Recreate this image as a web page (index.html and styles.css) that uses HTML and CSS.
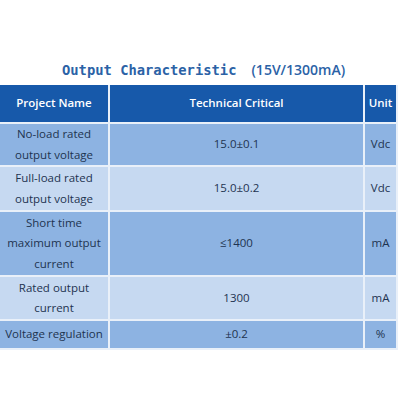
FILE: index.html
```html
<!DOCTYPE html>
<html>
<head>
<meta charset="utf-8">
<link rel="stylesheet" href="styles.css">
</head>
<body>
<div class="page">
  <h1 class="title"><span class="mono">Output Characteristic</span><span class="paren">(15V/1300mA)</span></h1>
  <table class="spec">
    <colgroup><col class="c1"><col class="c2"><col class="c3"></colgroup>
    <tr class="head"><th>Project Name</th><th>Technical Critical</th><th>Unit</th></tr>
    <tr class="mid r1"><td>No-load rated<br>output voltage</td><td class="val">15.0±0.1</td><td>Vdc</td></tr>
    <tr class="light r2"><td>Full-load rated<br>output voltage</td><td class="val">15.0±0.2</td><td>Vdc</td></tr>
    <tr class="mid r3"><td>Short time<br>maximum output<br>current</td><td class="val">≤1400</td><td>mA</td></tr>
    <tr class="light r4"><td>Rated output<br>current</td><td class="val">1300</td><td>mA</td></tr>
    <tr class="mid r5"><td>Voltage regulation</td><td class="val">±0.2</td><td>%</td></tr>
  </table>
</div>
</body>
</html>
```
FILE: styles.css
```css
html, body { margin: 0; padding: 0; background: #fff; }
.page { width: 400px; height: 400px; overflow: hidden; }
.title {
  margin: 0;
  height: 85px;
  box-sizing: border-box;
  padding: 55px 0 0 62px;
  font-weight: bold;
  color: #2b62a6;
  white-space: nowrap;
  line-height: 18px;
}
.mono { font-family: "DejaVu Sans Mono", "Liberation Mono", monospace; font-size: 13.8px; letter-spacing: 0; }
.paren { font-family: "Open Sans", "Noto Sans", sans-serif; font-size: 14px; font-weight: 600; margin-left: 15px; }
.spec {
  border-collapse: collapse;
  table-layout: fixed;
  width: 397px;
  font-family: "Open Sans", "Noto Sans", sans-serif;
  font-size: 11.5px;
  color: #1e3350;
}
.c1 { width: 109px; }
.c2 { width: 255px; }
.c3 { width: 33px; }
.spec th, .spec td {
  border: 2px solid #e9f0f9;
  padding: 0;
  text-align: center;
  line-height: 20.5px;
}
.spec tr > :first-child { border-left: none; }
.head th {
  background: #1759aa;
  color: #fff;
  font-weight: 600;
  height: 37px;
  border-top: none;
}
.mid td { background: #8db3e2; }
.light td { background: #c6d9f1; }
.r1 td { height: 41px; }
.r2 td { height: 43px; }
.r3 td { height: 63px; }
.r4 td { height: 42px; }
.r5 td { height: 27px; }
```
